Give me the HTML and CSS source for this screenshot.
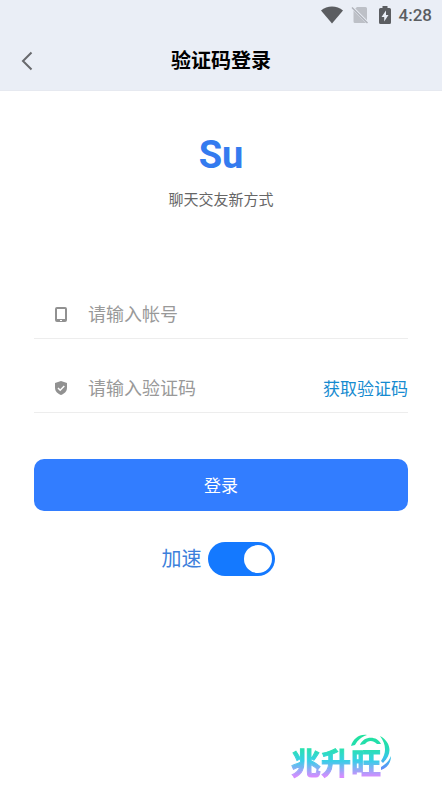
FILE: index.html
```html
<!DOCTYPE html>
<html lang="zh-CN">
<head>
<meta charset="utf-8">
<meta name="viewport" content="width=device-width, initial-scale=1">
<title>验证码登录</title>
<link rel="stylesheet" href="styles.css">
</head>
<body>
<header class="header">
  <div class="status">
    <svg class="wifi" viewBox="0 0 22 18" aria-hidden="true"><path d="M0 4.500C6-.7 16-.7 22 4.500L11 17.500Z"/></svg>
    <svg class="sim" viewBox="0 0 18 18" aria-hidden="true"><path d="M6 1H14.500Q16 1 16 2.500V14.200L4.300 2.500ZM2.500 4.400 15 17H4Q2.500 17 2.500 15.500Z"/><path class="slash" d="M1 1.500 16.500 17"/></svg>
    <svg class="battery" viewBox="0 0 12 18" aria-hidden="true"><path fill-rule="evenodd" d="M3.500 0H8.500V2H10.500Q12 2 12 3.500V16.500Q12 18 10.500 18H1.500Q0 18 0 16.500V3.500Q0 2 1.500 2H3.500ZM7 4.500 2.500 11H5.200V15.500L9.500 9H7Z"/></svg>
    <span class="time">4:28</span>
  </div>
  <nav class="nav">
    <button class="back" type="button" aria-label="返回"><svg viewBox="0 0 12 20" aria-hidden="true"><path d="M10.500 1.500 2 10l8.500 8.500"/></svg></button>
    <h1 class="title">验证码登录</h1>
  </nav>
</header>
<main class="main">
  <div class="brand">Su</div>
  <p class="slogan">聊天交友新方式</p>
  <form class="form">
    <div class="field">
      <label for="account" aria-label="帐号"><svg class="icon" viewBox="0 0 14 16" aria-hidden="true"><path fill-rule="evenodd" d="M3 0H11Q13 0 13 2V13Q13 15 11 15H3Q1 15 1 13V2Q1 0 3 0ZM3 2V12H11V2ZM6 13V14H8V13Z"/></svg></label>
      <input id="account" type="text" placeholder="请输入帐号">
    </div>
    <div class="field">
      <label for="code" aria-label="验证码"><svg class="icon" viewBox="0 0 14 16" aria-hidden="true"><path d="M7 0 13 2V6.500C13 10.500 10.500 12.500 7 14C3.500 12.500 1 10.500 1 6.500V2Z"/><path class="check" d="m4 7 2.200 2.200L10.300 5"/></svg></label>
      <input id="code" type="text" placeholder="请输入验证码">
      <button class="get-code" type="button">获取验证码</button>
    </div>
    <button class="submit" type="submit">登录</button>
    <label class="boost">加速<input type="checkbox" role="switch" checked></label>
  </form>
</main>
<footer class="footer">
  <div class="mark">
    <span class="mark-text">兆升旺</span>
    <svg class="arcs" viewBox="0 0 42 38" aria-hidden="true">
      <defs><linearGradient id="g" x1="0" y1="0" x2="0" y2="38" gradientUnits="userSpaceOnUse"><stop offset="0" stop-color="#20e39a"/><stop offset=".35" stop-color="#25dcb5"/><stop offset=".6" stop-color="#35c8e5"/><stop offset="1" stop-color="#6a7cff"/></linearGradient></defs>
      <g fill="url(#g)"><path d="M1 12C3 5 9 0 17 1C11 3 8 6 5 11Z"/><path d="M10 11C13 2 27 1 31 10H27C23 6 18 6 15 10Z"/><path d="M30 2C41 8 43 20 33 29L31 27C37 18 36 10 30 2Z"/><path d="M41 22C41 29 37 34 31 36V33C36 30 39 27 41 22Z"/></g>
    </svg>
  </div>
</footer>
</body>
</html>
```
FILE: styles.css
```css
* { box-sizing: border-box; }
body {
  margin: 0;
  min-height: 100vh;
  display: flex;
  flex-direction: column;
  background: #fff;
  font-family: Roboto, "Noto Sans CJK SC", sans-serif;
}
button {
  border: 0;
  padding: 0;
  background: none;
  font: inherit;
}
svg { display: block; }
.header {
  background: #eaeef6;
  border-bottom: 1px solid #e6e9f0;
}
.status {
  height: 30px;
  padding: 0 10px;
  display: flex;
  justify-content: flex-end;
  align-items: center;
  color: #5b5d61;
  fill: currentColor;
}
.wifi { width: 22px; height: 18px; }
.sim { width: 18px; height: 18px; margin: 0 10px 0 8px; fill: #bdc0c7; }
.slash { stroke: #b0b3ba; stroke-width: 1.5; }
.battery { width: 12px; height: 18px; }
.time {
  margin-left: 8px;
  font-size: 17px;
  font-weight: 500;
}
.nav {
  height: 60px;
  padding: 2px 20px 0;
  display: grid;
  grid-template-columns: 20px 1fr 20px;
  align-items: center;
}
.back svg {
  width: 14px;
  height: 20px;
  fill: none;
  stroke: #68696d;
  stroke-width: 2;
}
.title {
  margin: 0;
  text-align: center;
  font-size: 20px;
  line-height: 30px;
  font-weight: 700;
  color: #000;
}
.main { padding: 40px 34px 0; }
.brand {
  text-align: center;
  font-size: 38px;
  line-height: 48px;
  font-weight: 700;
  color: #347bef;
}
.slogan {
  margin: 11px 0 0;
  text-align: center;
  font-size: 15px;
  line-height: 20px;
  color: #666;
}
.form {
  margin-top: 55px;
  display: flex;
  flex-direction: column;
}
.field {
  height: 74px;
  padding-top: 26px;
  display: flex;
  align-items: center;
  border-bottom: 1px solid #ededed;
}
.icon {
  width: 14px;
  height: 16px;
  margin: 0 20px;
  fill: #919191;
}
.check { fill: none; stroke: #fff; stroke-width: 1.5; }
.field input {
  flex: 1;
  min-width: 0;
  padding: 0;
  border: 0;
  outline: 0;
  background: none;
  font: inherit;
  font-size: 18px;
  line-height: 28px;
  color: #333;
}
.field input::placeholder { color: #999; opacity: 1; }
.get-code {
  font-size: 17px;
  line-height: 28px;
  color: #168bd0;
}
.submit {
  height: 52px;
  margin-top: 46px;
  padding-bottom: 2px;
  border-radius: 10px;
  background: #327dff;
  color: #fff;
  font-size: 17px;
}
.boost {
  margin: 31px 6px 0 0;
  display: flex;
  align-self: center;
  align-items: center;
  gap: 6px;
  font-size: 20px;
  line-height: 34px;
  color: #3c7fdb;
}
.boost input {
  appearance: none;
  width: 67px;
  height: 34px;
  margin: 0;
  padding: 3px;
  display: flex;
  justify-content: flex-end;
  border-radius: 17px;
  background: #1479ff;
}
.boost input::before {
  content: "";
  width: 28px;
  height: 28px;
  border-radius: 50%;
  background: #fff;
}
.boost input:not(:checked) { justify-content: flex-start; background: #ccc; }
.footer {
  margin-top: auto;
  padding: 0 50px 2px 0;
  display: flex;
  justify-content: flex-end;
}
.mark {
  position: relative;
  padding: 5px 11px 0 0;
}
.mark-text {
  display: block;
  font-size: 30px;
  line-height: 44px;
  font-weight: 700;
  font-family: "Noto Sans CJK SC", sans-serif;
  color: transparent;
  background: linear-gradient(#25e6a0 15%, #38cfe8 50%, #d58cff 85%);
  background-clip: text;
  -webkit-background-clip: text;
  -webkit-text-stroke: 1px transparent;
}
.arcs {
  position: absolute;
  top: 0;
  right: 0;
  width: 42px;
  height: 38px;
}
```
